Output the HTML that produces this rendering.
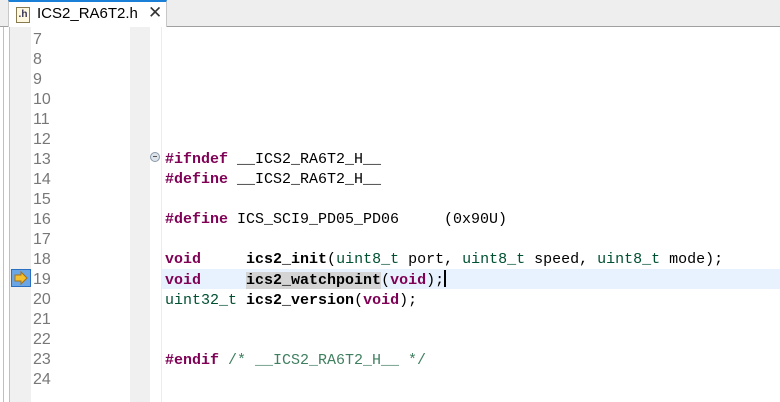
<!DOCTYPE html>
<html><head><style>
body{margin:0;width:780px;height:402px;overflow:hidden;background:#fff;position:relative;font-family:"Liberation Sans",sans-serif}
.tabbar{position:absolute;left:0;top:0;width:780px;height:26px;background:#eeeeee;border-bottom:1px solid #a0a0a0}
.tab{position:absolute;left:8px;top:0;width:159px;height:27px;background:#fff;border-left:1px solid #c8c8c8;border-right:1px solid #c8c8c8;box-sizing:border-box;border-top:2px solid #1a7fd6}
.tab span{position:absolute;left:28px;top:3px;font-size:15px;color:#000}
.tab .x{position:absolute;left:139px;top:1px;font-size:17px;color:#333}
.ico{position:absolute;left:7px;top:5px;width:12px;height:14px;border:1px solid #8a7a50;background:#fff8e0;font-size:10px;font-weight:bold;color:#335;line-height:14px;text-align:center}
.l1{position:absolute;left:3px;top:27px;width:1px;height:375px;background:#c0c0c0}
.l2{position:absolute;left:9px;top:27px;width:1px;height:375px;background:#c0c0c0}
.ruler{position:absolute;left:10px;top:27px;width:21px;height:375px;background:#f0f0f0}
.fold{position:absolute;left:130px;top:27px;width:20px;height:375px;background:#f0f0f0}
.vl{position:absolute;left:161px;top:27px;width:1px;height:375px;background:#ececec}
.hl{position:absolute;left:162px;top:269px;width:618px;height:20px;background:#e8f2fe}
.num{position:absolute;left:33px;font-size:16px;color:#787878;line-height:20px}
.code{position:absolute;left:165px;font-family:"Liberation Mono",monospace;font-size:15px;line-height:20px;white-space:pre;color:#000}
.k{color:#7f0055;font-weight:bold}
.t{color:#005032}
.b{font-weight:bold}
.c{color:#3f7f5f}
.sel{background:#d4d4d4}
</style></head><body>
<div class="tabbar"><div class="tab"><div class="ico">.h</div><span>ICS2_RA6T2.h</span><span class="x">✕</span></div></div>
<div class="l1"></div><div class="l2"></div><div class="ruler"></div><div class="fold"></div><div class="vl"></div>
<div class="hl"></div>
<div style="position:absolute;left:11px;top:269px;width:20px;height:18px;background:#6aa6e6;border:1px solid #2a6fc0;box-sizing:border-box"></div>
<svg style="position:absolute;left:13px;top:270px" width="16" height="16" viewBox="0 0 16 16"><path d="M2 5h6V2l6 6-6 6v-3H2z" fill="#f5c030" stroke="#a87010" stroke-width="1"/></svg>
<div style="position:absolute;left:150px;top:152px;width:10px;height:10px;border-radius:50%;background:#dde3ea;border:1px solid #8a98a8;box-sizing:border-box"><div style="position:absolute;left:2px;top:3px;width:4px;height:1px;background:#555"></div></div>
<div class="num" style="top:30px">7<br>8<br>9<br>10<br>11<br>12<br>13<br>14<br>15<br>16<br>17<br>18<br>19<br>20<br>21<br>22<br>23<br>24</div>
<div class="code" style="top:150px"><span class="k">#ifndef</span> __ICS2_RA6T2_H__
<span class="k">#define</span> __ICS2_RA6T2_H__

<span class="k">#define</span> ICS_SCI9_PD05_PD06     (0x90U)

<span class="k">void</span>     <span class="b">ics2_init</span>(<span class="t">uint8_t</span> port, <span class="t">uint8_t</span> speed, <span class="t">uint8_t</span> mode);
<span class="k">void</span>     <span class="b sel">ics2_watchpoint</span>(<span class="k">void</span>);<span style="display:inline-block;width:2px;height:17px;background:#000;vertical-align:-3px"></span>
<span class="t">uint32_t</span> <span class="b">ics2_version</span>(<span class="k">void</span>);


<span class="k">#endif</span> <span class="c">/* __ICS2_RA6T2_H__ */</span></div>
</body></html>
